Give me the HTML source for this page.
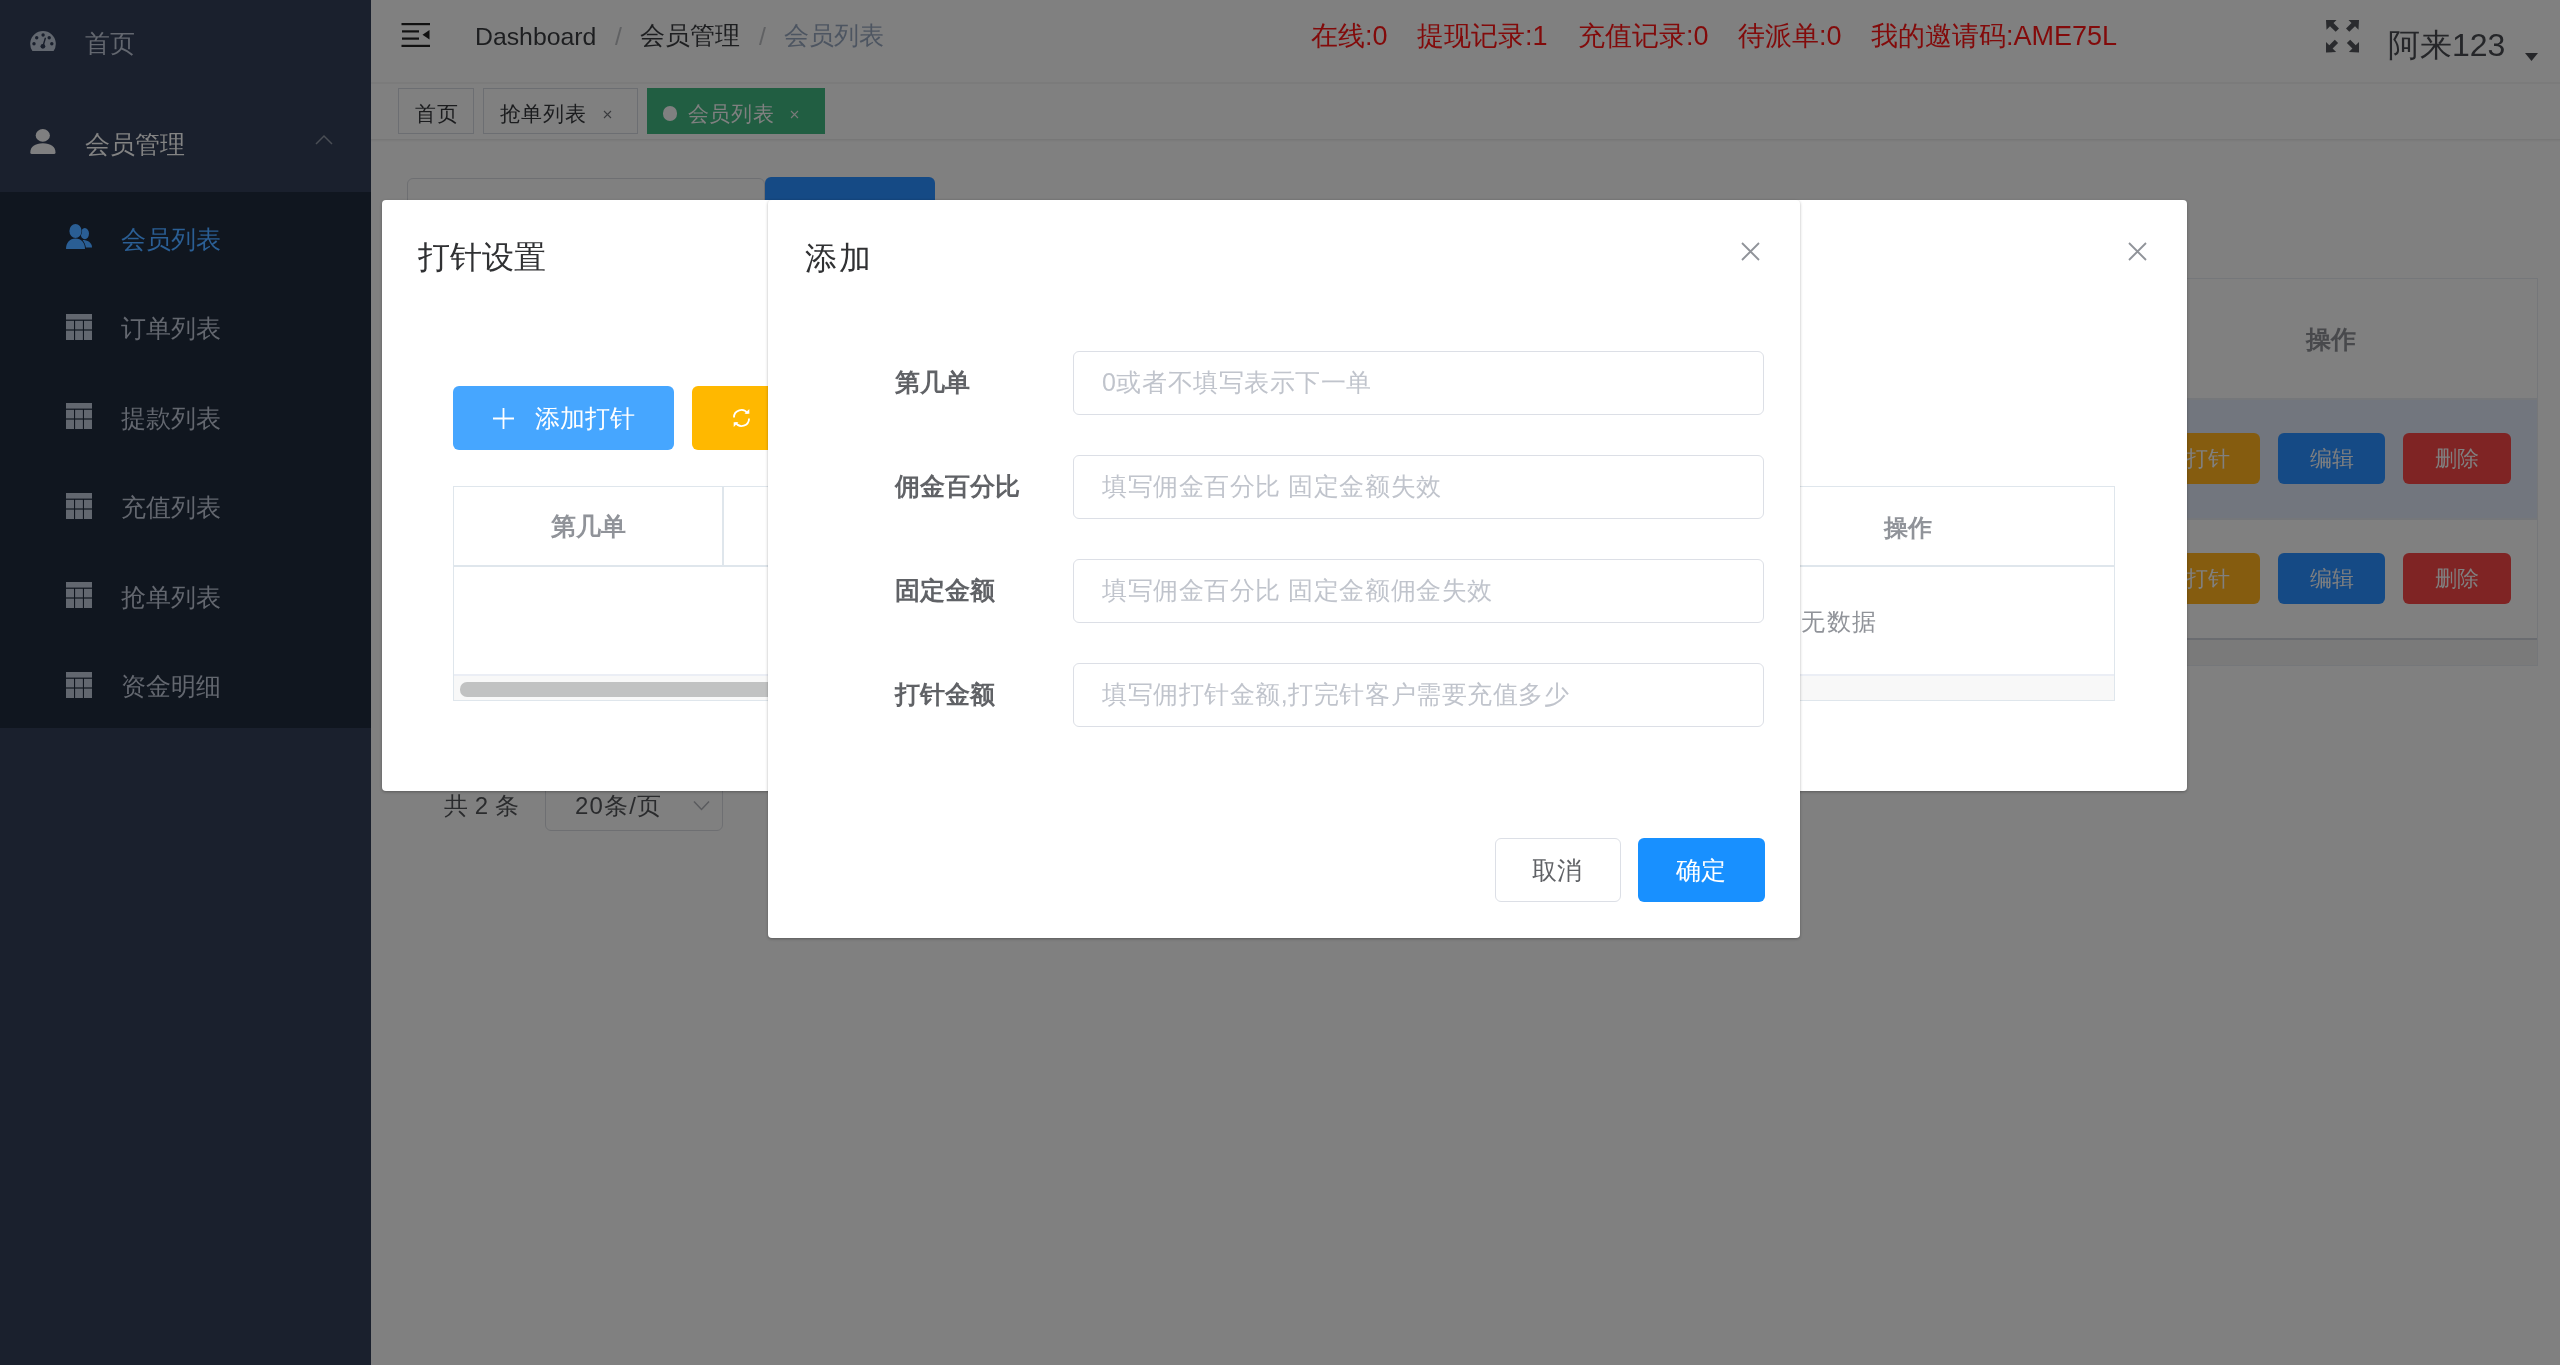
<!DOCTYPE html>
<html><head><meta charset="utf-8">
<style>
*{box-sizing:border-box;margin:0;padding:0}
html,body{width:2560px;height:1365px;overflow:hidden}
body{position:relative;background:#808080;font-family:"Liberation Sans",sans-serif;}
#root{position:absolute;left:0;top:0;width:2560px;height:1365px;will-change:transform}
.a{position:absolute;white-space:nowrap}
.t{line-height:1}
/* sidebar */
#side{position:absolute;left:0;top:0;width:371px;height:1365px;background:#1a202d}
#sub{position:absolute;left:0;top:192px;width:371px;height:536px;background:#10161f}
.mi{color:#63676f;font-size:25px}
.grid{position:absolute;width:26px;height:26px}
</style></head><body><div id="root">

<!-- ============ SIDEBAR ============ -->
<div id="side">
  <div id="sub"></div>
  <!-- dashboard icon -->
  <svg class="a" style="left:30px;top:31px" width="26" height="21" viewBox="0 0 26 21">
    <path d="M2.4 20 A12.8 12.8 0 1 1 23.6 20 Z" fill="#62676f"/>
    <g fill="#1a202d"><circle cx="13.1" cy="4" r="1.7"/><circle cx="6.7" cy="6.7" r="1.7"/><circle cx="19.2" cy="6.7" r="1.7"/><circle cx="4" cy="12.8" r="1.7"/><circle cx="21.8" cy="12.8" r="1.7"/><circle cx="12.9" cy="15.3" r="2.4"/></g>
    <path d="M15.3 7.3 L12.9 15.5" stroke="#1a202d" stroke-width="1.4" stroke-linecap="round"/>
  </svg>
  <div class="a t mi" style="left:85px;top:31px">首页</div>

  <!-- user icon -->
  <svg class="a" style="left:30px;top:129px" width="26" height="26" viewBox="0 0 26 26">
    <ellipse cx="12.8" cy="6.4" rx="7.1" ry="6.3" fill="#7f7f80"/>
    <path d="M0.3 23.5C0.3 17.8 5 14.3 12.9 14.3S25.5 17.8 25.5 23.5Q25.5 25 24 25H1.8Q0.3 25 0.3 23.5z" fill="#7f7f80"/>
  </svg>
  <div class="a t mi" style="left:85px;top:132px;color:#838383">会员管理</div>
  <svg class="a" style="left:315px;top:134px" width="18" height="11" viewBox="0 0 18 11">
    <path d="M1 10L9 2l8 8" stroke="#4a4e55" stroke-width="1.5" fill="none"/>
  </svg>

  <!-- active submenu item -->
  <svg class="a" style="left:66px;top:224px" width="26" height="25" viewBox="0 0 26 25">
    <ellipse cx="18.8" cy="9.6" rx="4.2" ry="5.6" fill="#2a5e94"/>
    <path d="M16.5 16c5 0 9.5 2.6 9.5 7.2v.3h-7c-.3-3-1-5.5-2.5-7.5z" fill="#2a5e94"/>
    <ellipse cx="9.5" cy="7" rx="6.6" ry="7.4" fill="#10161f"/>
    <path d="M-1 25.5c0-6.5 4-11.5 10.5-11.5S20 19 20 25.5z" fill="#10161f"/>
    <ellipse cx="9.5" cy="7" rx="6.1" ry="7" fill="#2a5e94"/>
    <path d="M0 25c0-6 3.5-10.5 9.5-10.5S19 19 19 25z" fill="#2a5e94"/>
  </svg>
  <div class="a t mi" style="left:121px;top:226.5px;color:#2b5f95">会员列表</div>

  <svg class="a" style="left:66px;top:313.5px" width="26" height="26" viewBox="0 0 26 26"><g fill="#62676f"><rect x="0" y="0" width="26" height="5.6"/><rect x="0" y="6.8" width="8" height="8.6"/><rect x="9.1" y="6.8" width="7.8" height="8.6"/><rect x="18" y="6.8" width="8" height="8.6"/><rect x="0" y="16.6" width="8" height="9.4"/><rect x="9.1" y="16.6" width="7.8" height="9.4"/><rect x="18" y="16.6" width="8" height="9.4"/></g></svg>
  <div class="a t mi" style="left:121px;top:316.0px">订单列表</div>
  <svg class="a" style="left:66px;top:403px" width="26" height="26" viewBox="0 0 26 26"><g fill="#62676f"><rect x="0" y="0" width="26" height="5.6"/><rect x="0" y="6.8" width="8" height="8.6"/><rect x="9.1" y="6.8" width="7.8" height="8.6"/><rect x="18" y="6.8" width="8" height="8.6"/><rect x="0" y="16.6" width="8" height="9.4"/><rect x="9.1" y="16.6" width="7.8" height="9.4"/><rect x="18" y="16.6" width="8" height="9.4"/></g></svg>
  <div class="a t mi" style="left:121px;top:405.5px">提款列表</div>
  <svg class="a" style="left:66px;top:492.5px" width="26" height="26" viewBox="0 0 26 26"><g fill="#62676f"><rect x="0" y="0" width="26" height="5.6"/><rect x="0" y="6.8" width="8" height="8.6"/><rect x="9.1" y="6.8" width="7.8" height="8.6"/><rect x="18" y="6.8" width="8" height="8.6"/><rect x="0" y="16.6" width="8" height="9.4"/><rect x="9.1" y="16.6" width="7.8" height="9.4"/><rect x="18" y="16.6" width="8" height="9.4"/></g></svg>
  <div class="a t mi" style="left:121px;top:495.0px">充值列表</div>
  <svg class="a" style="left:66px;top:582px" width="26" height="26" viewBox="0 0 26 26"><g fill="#62676f"><rect x="0" y="0" width="26" height="5.6"/><rect x="0" y="6.8" width="8" height="8.6"/><rect x="9.1" y="6.8" width="7.8" height="8.6"/><rect x="18" y="6.8" width="8" height="8.6"/><rect x="0" y="16.6" width="8" height="9.4"/><rect x="9.1" y="16.6" width="7.8" height="9.4"/><rect x="18" y="16.6" width="8" height="9.4"/></g></svg>
  <div class="a t mi" style="left:121px;top:584.5px">抢单列表</div>
  <svg class="a" style="left:66px;top:671.5px" width="26" height="26" viewBox="0 0 26 26"><g fill="#62676f"><rect x="0" y="0" width="26" height="5.6"/><rect x="0" y="6.8" width="8" height="8.6"/><rect x="9.1" y="6.8" width="7.8" height="8.6"/><rect x="18" y="6.8" width="8" height="8.6"/><rect x="0" y="16.6" width="8" height="9.4"/><rect x="9.1" y="16.6" width="7.8" height="9.4"/><rect x="18" y="16.6" width="8" height="9.4"/></g></svg>
  <div class="a t mi" style="left:121px;top:674.0px">资金明细</div>
</div>


<!-- ============ NAVBAR ============ -->
<svg class="a" style="left:401px;top:22px" width="30" height="26" viewBox="0 0 30 26">
  <rect x="0.5" y="1" width="28.5" height="2.2" fill="#111"/>
  <rect x="1" y="8.3" width="17" height="2.2" fill="#111"/>
  <rect x="1" y="15.5" width="17" height="2.2" fill="#111"/>
  <rect x="0.5" y="22.8" width="28.5" height="2.2" fill="#111"/>
  <path d="M28.5 8 L21.5 12.8 L28.5 17.5z" fill="#111"/>
</svg>
<div class="a t" style="left:475px;top:24.5px;font-size:24.8px;color:#1d1e20">Dashboard</div>
<div class="a t" style="left:615px;top:24.5px;font-size:24.8px;color:#606163">/</div>
<div class="a t" style="left:640px;top:23.5px;font-size:24.8px;color:#1d1e20">会员管理</div>
<div class="a t" style="left:759px;top:24.5px;font-size:24.8px;color:#606163">/</div>
<div class="a t" style="left:784px;top:23.5px;font-size:24.8px;color:#4d5561">会员列表</div>

<div class="a t" style="left:1311px;top:23px;font-size:27px;color:#820a0a">在线:0</div>
<div class="a t" style="left:1417px;top:23px;font-size:27px;color:#820a0a">提现记录:1</div>
<div class="a t" style="left:1578px;top:23px;font-size:27px;color:#820a0a">充值记录:0</div>
<div class="a t" style="left:1738px;top:23px;font-size:27px;color:#820a0a">待派单:0</div>
<div class="a t" style="left:1871px;top:23px;font-size:27px;color:#820a0a">我的邀请码:AME75L</div>

<!-- fullscreen icon -->
<svg class="a" style="left:2326px;top:19.5px" width="33" height="33" viewBox="0 0 33 33">
  <g fill="#2a2b2e">
    <path d="M0 0h10.5L7.5 3l5.5 5.5-3.3 3.3L4 6.3 0.5 9.8z"/>
    <path d="M33 0H22.5l3 3-5.5 5.5 3.3 3.3L29 6.3l3.5 3.5z"/>
    <path d="M0 32.5V22l3.3 3.3 5.5-5.5 3.3 3.3-5.5 5.5 3.5 3.5z"/>
    <path d="M33 32.5V22l-3.3 3.3-5.5-5.5-3.3 3.3 5.5 5.5-3.5 3.5z"/>
  </g>
</svg>
<div class="a t" style="left:2388px;top:29px;font-size:32px;color:#252629">阿来123</div>
<svg class="a" style="left:2525px;top:52.5px" width="13" height="8" viewBox="0 0 13 8"><path d="M0 0h13L6.5 8z" fill="#252629"/></svg>

<!-- navbar bottom shadow / tags view -->
<div class="a" style="left:371px;top:82px;width:2189px;height:2px;background:rgba(0,0,0,0.04)"></div>
<div class="a" style="left:371px;top:139px;width:2189px;height:3px;background:linear-gradient(rgba(0,0,0,0.08),rgba(0,0,0,0))"></div>

<div class="a" style="left:398px;top:88px;width:76px;height:46px;border:1.6px solid #6c6e72"></div>
<div class="a t" style="left:415px;top:103px;font-size:21px;letter-spacing:0.7px;color:#1b1c1e">首页</div>
<div class="a" style="left:483px;top:88px;width:155px;height:46px;border:1.6px solid #6c6e72"></div>
<div class="a t" style="left:499.5px;top:103px;font-size:21px;letter-spacing:0.7px;color:#1b1c1e">抢单列表</div>
<svg class="a" style="left:603px;top:110px" width="9" height="9" viewBox="0 0 9 9"><path d="M1 1l7 7M8 1L1 8" stroke="#3a3b3e" stroke-width="1.1"/></svg>
<div class="a" style="left:647px;top:88px;width:178px;height:46px;background:#215e42"></div>
<div class="a" style="left:662.5px;top:106px;width:14.5px;height:14.5px;border-radius:50%;background:#808080"></div>
<div class="a t" style="left:687.5px;top:103px;font-size:21px;letter-spacing:0.7px;color:#808080">会员列表</div>
<svg class="a" style="left:790px;top:110px" width="9" height="9" viewBox="0 0 9 9"><path d="M1 1l7 7M8 1L1 8" stroke="#7a7a7a" stroke-width="1.1"/></svg>

<!-- ============ CONTENT (under mask) ============ -->
<div class="a" style="left:407px;top:178px;width:358px;height:64px;border:1.6px solid #6e6f72;border-radius:6px"></div>
<div class="a" style="left:765px;top:177px;width:170px;height:64px;background:#154a85;border-radius:6px"></div>

<!-- right side table -->
<div class="a" style="left:2150px;top:278px;width:388px;height:388px;border:1.5px solid #75777a;border-left:none"></div>
<div class="a" style="left:2150px;top:398px;width:387px;height:1.5px;background:#75777a"></div>
<div class="a" style="left:2150px;top:399.5px;width:387px;height:119px;background:#72767e"></div>
<div class="a" style="left:2150px;top:518px;width:387px;height:1.5px;background:#75777a"></div>
<div class="a" style="left:2150px;top:638px;width:387px;height:2px;background:#6a6c70"></div>
<div class="a" style="left:2150px;top:640px;width:387px;height:25px;background:#7a7a7a"></div>
<div class="a t" style="left:2306px;top:327.5px;font-size:24.5px;font-weight:bold;color:#48494c">操作</div>

<div class="a" style="left:2153px;top:433px;width:107px;height:51px;background:#855c0f;border-radius:6px"></div>
<div class="a" style="left:2278px;top:433px;width:107px;height:51px;background:#154a85;border-radius:6px"></div>
<div class="a" style="left:2403px;top:433px;width:108px;height:51px;background:#7f2424;border-radius:6px"></div>
<div class="a t" style="left:2186px;top:448px;font-size:22px;color:#808080">打针</div>
<div class="a t" style="left:2310px;top:448px;font-size:22px;color:#808080">编辑</div>
<div class="a t" style="left:2435px;top:448px;font-size:22px;color:#808080">删除</div>

<div class="a" style="left:2153px;top:553px;width:107px;height:51px;background:#855c0f;border-radius:6px"></div>
<div class="a" style="left:2278px;top:553px;width:107px;height:51px;background:#154a85;border-radius:6px"></div>
<div class="a" style="left:2403px;top:553px;width:108px;height:51px;background:#7f2424;border-radius:6px"></div>
<div class="a t" style="left:2186px;top:568px;font-size:22px;color:#808080">打针</div>
<div class="a t" style="left:2310px;top:568px;font-size:22px;color:#808080">编辑</div>
<div class="a t" style="left:2435px;top:568px;font-size:22px;color:#808080">删除</div>

<!-- pagination -->
<div class="a t" style="left:444px;top:794px;font-size:24px;color:#2a2b2d">共 2 条</div>
<div class="a" style="left:545px;top:766px;width:178px;height:65px;border:1.6px solid #6e6f72;border-radius:6px"></div>
<div class="a t" style="left:575px;top:794px;font-size:24px;letter-spacing:1.2px;color:#2a2b2d">20条/页</div>
<svg class="a" style="left:693px;top:800px" width="17" height="11" viewBox="0 0 17 11"><path d="M1 1.5l7.5 8 7.5-8" stroke="#5a5b5e" stroke-width="1.5" fill="none"/></svg>


<!-- ============ DIALOG 1 ============ -->
<div class="a" style="left:382px;top:200px;width:1805px;height:591px;background:#fff;border-radius:4px;box-shadow:0 1px 3px rgba(0,0,0,0.3)"></div>
<div class="a t" style="left:418px;top:241px;font-size:32.4px;color:#303133">打针设置</div>
<svg class="a" style="left:2128px;top:242px" width="19" height="19" viewBox="0 0 19 19"><path d="M1 1l17 17M18 1L1 18" stroke="#909399" stroke-width="1.8"/></svg>

<div class="a" style="left:453px;top:386px;width:221px;height:64px;background:#46a6ff;border-radius:6px"></div>
<svg class="a" style="left:493px;top:408px" width="21" height="21" viewBox="0 0 21 21"><path d="M10.5 0v21M0 10.5h21" stroke="#fff" stroke-width="1.8"/></svg>
<div class="a t" style="left:534.5px;top:407px;font-size:24.6px;color:#fff">添加打针</div>
<div class="a" style="left:692px;top:386px;width:120px;height:64px;background:#ffb800;border-radius:6px"></div>
<svg class="a" style="left:731px;top:408px" width="21" height="20" viewBox="0 0 21 20">
  <path d="M3 9.5A7.3 7.3 0 0 1 16.5 5.5" stroke="#fff" stroke-width="1.8" fill="none"/>
  <path d="M18 10.5A7.3 7.3 0 0 1 4.5 14.5" stroke="#fff" stroke-width="1.8" fill="none"/>
  <path d="M13.5 5.8h4.8V1z" fill="#fff"/>
  <path d="M7.5 14.2H2.7V19z" fill="#fff"/>
</svg>

<!-- table in dialog1 -->
<div class="a" style="left:453px;top:486px;width:1662px;height:215px;border:1.5px solid #dfe6ec"></div>
<div class="a" style="left:454px;top:565px;width:1660px;height:1.5px;background:#dfe6ec"></div>
<div class="a" style="left:722px;top:487px;width:1.5px;height:79px;background:#dfe6ec"></div>
<div class="a t" style="left:551px;top:515px;font-size:24.5px;font-weight:bold;color:#909399">第几单</div>
<div class="a t" style="left:1884px;top:515.5px;font-size:24px;font-weight:bold;color:#909399">操作</div>
<div class="a t" style="left:1801px;top:609.5px;font-size:24px;letter-spacing:1.6px;color:#909399">无数据</div>
<div class="a" style="left:454px;top:674px;width:1660px;height:1.5px;background:#ebeef5"></div>
<div class="a" style="left:454px;top:675.5px;width:1660px;height:24px;background:#f8f8f8"></div>
<div class="a" style="left:460px;top:682px;width:800px;height:14.5px;background:#c1c2c2;border-radius:7px"></div>

<!-- ============ DIALOG 2 ============ -->
<div class="a" style="left:768px;top:200px;width:1032px;height:738px;background:#fff;border-radius:4px;box-shadow:0 1px 3px rgba(0,0,0,0.3)"></div>
<div class="a t" style="left:804.5px;top:242px;font-size:32.4px;letter-spacing:2.5px;color:#303133">添加</div>
<svg class="a" style="left:1741px;top:242px" width="19" height="19" viewBox="0 0 19 19"><path d="M1 1l17 17M18 1L1 18" stroke="#909399" stroke-width="1.8"/></svg>
<div class="a t" style="left:895px;top:370px;font-size:25px;font-weight:bold;color:#606266">第几单</div>
<div class="a" style="left:1073px;top:351px;width:691px;height:64px;border:1.6px solid #dcdfe6;border-radius:6px"></div>
<div class="a t" style="left:1102px;top:370px;font-size:25px;letter-spacing:0.55px;color:#c0c4cc">0或者不填写表示下一单</div>
<div class="a t" style="left:895px;top:474px;font-size:25px;font-weight:bold;color:#606266">佣金百分比</div>
<div class="a" style="left:1073px;top:455px;width:691px;height:64px;border:1.6px solid #dcdfe6;border-radius:6px"></div>
<div class="a t" style="left:1102px;top:474px;font-size:25px;letter-spacing:0.55px;color:#c0c4cc">填写佣金百分比 固定金额失效</div>
<div class="a t" style="left:895px;top:578px;font-size:25px;font-weight:bold;color:#606266">固定金额</div>
<div class="a" style="left:1073px;top:559px;width:691px;height:64px;border:1.6px solid #dcdfe6;border-radius:6px"></div>
<div class="a t" style="left:1102px;top:578px;font-size:25px;letter-spacing:0.55px;color:#c0c4cc">填写佣金百分比 固定金额佣金失效</div>
<div class="a t" style="left:895px;top:682px;font-size:25px;font-weight:bold;color:#606266">打针金额</div>
<div class="a" style="left:1073px;top:663px;width:691px;height:64px;border:1.6px solid #dcdfe6;border-radius:6px"></div>
<div class="a t" style="left:1102px;top:682px;font-size:25px;letter-spacing:0.55px;color:#c0c4cc">填写佣打针金额,打完针客户需要充值多少</div>

<div class="a" style="left:1495px;top:838px;width:126px;height:64px;border:1.6px solid #dcdfe6;border-radius:6px;background:#fff"></div>
<div class="a t" style="left:1532px;top:858px;font-size:25.3px;color:#606266">取消</div>
<div class="a" style="left:1638px;top:838px;width:127px;height:64px;background:#1890ff;border-radius:6px"></div>
<div class="a t" style="left:1676px;top:858px;font-size:25.3px;color:#fff">确定</div>

</div></body></html>
